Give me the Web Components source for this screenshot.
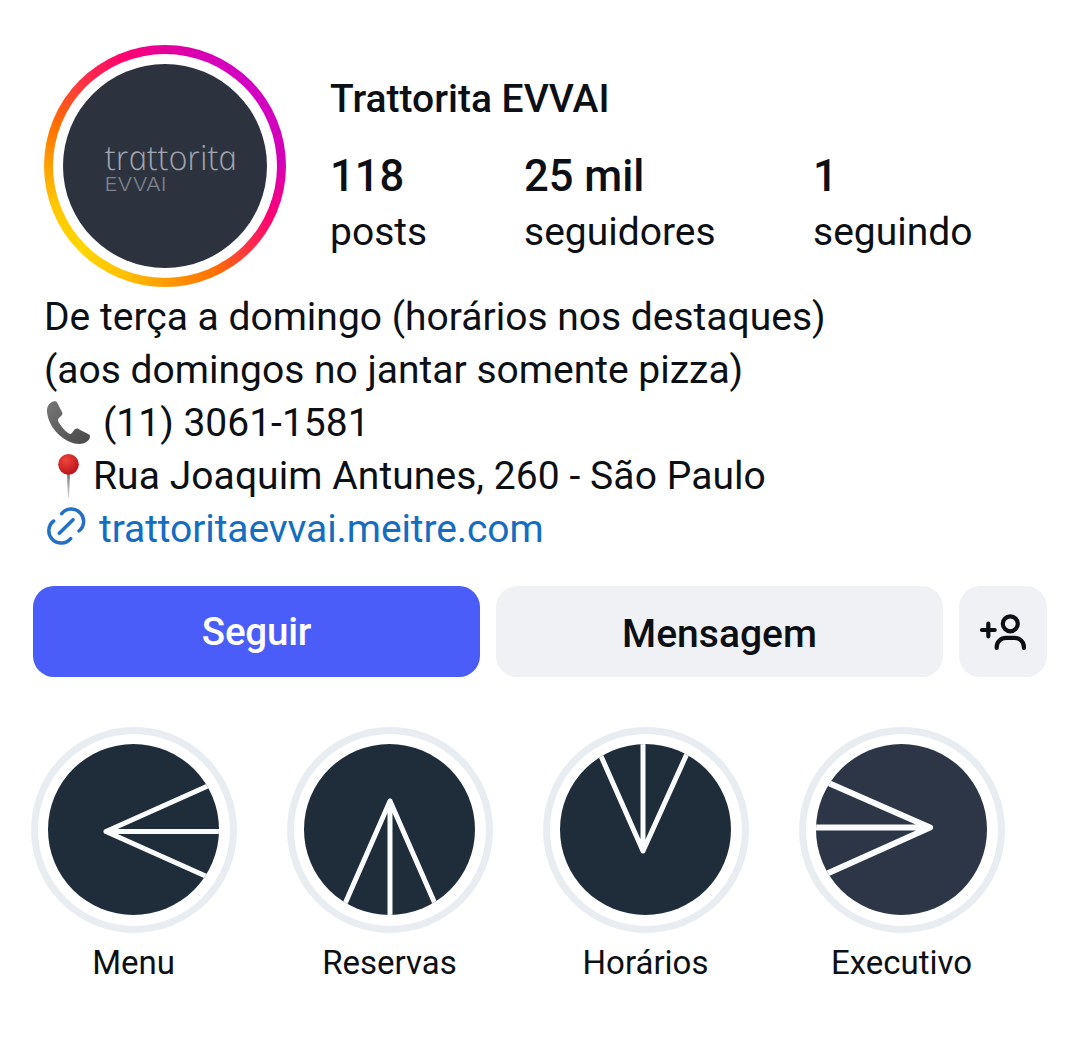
<!DOCTYPE html>
<html lang="pt-BR">
<head>
<meta charset="utf-8">
<title>Trattorita EVVAI</title>
<style>
body{margin:0;background:#fff;color:#0c1014;font-family:Roboto,"Liberation Sans",sans-serif}
</style>
</head>
<body>
<profile-page></profile-page>
<script>
const define=(name,html,setup)=>{
  const t=document.createElement('template');
  t.innerHTML=html;
  customElements.define(name,class extends HTMLElement{
    constructor(){super();this.attachShadow({mode:'open'}).append(t.content.cloneNode(true));}
    connectedCallback(){if(setup)setup(this,this.shadowRoot);}
  });
};

define('story-avatar',`<style>
:host{display:block;flex:none;width:242px;height:242px}
.ring{box-sizing:border-box;width:100%;height:100%;padding:9px;border-radius:50%;background:conic-gradient(#e5009a 0deg,#d800b5 20deg,#d300c5 45deg,#d300b8 88deg,#ff0075 115deg,#ff3344 135deg,#ff7000 155deg,#ff9c00 180deg,#ffc000 200deg,#ffd600 225deg,#ffc800 250deg,#ffa000 270deg,#ff7000 290deg,#ff3344 315deg,#ff0070 340deg,#e5009a 360deg)}
.gap{box-sizing:border-box;width:100%;height:100%;padding:10px;border-radius:50%;background:#fff}
svg{display:block;width:204px;height:204px;border-radius:50%;background:#2c333f}
.word{font-family:"Open Sans",sans-serif;font-style:italic;font-weight:300}
.sub{font-family:Inter,Lato,sans-serif;font-weight:300}
</style>
<div class="ring"><div class="gap"><svg viewBox="0 0 204 204">
<!-- the italic's single-storey letters, set upright -->
<text class="word" transform="translate(44 106) skewX(12)" font-size="34.500" textLength="132" lengthAdjust="spacingAndGlyphs" fill="#a0a5ae">trattorita</text>
<text class="sub" x="41.500" y="126.500" font-size="19" textLength="62" lengthAdjust="spacingAndGlyphs" fill="#7d848e">EVVAI</text>
</svg></div></div>`);

define('profile-stat',`<style>
:host{display:flex;flex-direction:column}
.n{font-size:43.5px;line-height:52px;font-weight:500}
.l{font-size:39px;line-height:52px;margin-top:3px}
</style><span class="n"><slot name="count"></slot></span><span class="l"><slot></slot></span>`);

define('profile-header',`<style>
:host{display:flex;gap:44px;padding:45px 0 0 44px;height:242px}
.info{display:flex;flex-direction:column;padding-top:28px}
.name{font-size:39px;line-height:52px;font-weight:500}
.stats{display:grid;grid-template-columns:194px 289px auto;margin-top:26px}
</style>
<story-avatar></story-avatar>
<div class="info"><span class="name"><slot></slot></span>
<div class="stats"><slot name="stats"></slot></div></div>`);

define('bio-line',`<style>
:host{display:flex;align-items:center;height:53.1px;font-size:39px;white-space:pre}
:host([link]){color:#156dc2;letter-spacing:-.1px}
::slotted(svg){flex:none;display:block}
</style><slot name="icon"></slot><span><slot></slot></span>`);

define('action-button',`<style>
:host{display:block;flex:1}
:host([compact]){flex:0 0 88px}
button{display:flex;align-items:center;justify-content:center;width:100%;height:91px;margin:0;padding:5px 0 0;border:0;border-radius:21px;background:#f0f1f5;color:#0c1014;font:500 39px Roboto,sans-serif}
:host([primary]) button{background:#4a5df9;color:#fff;padding:0;font-size:38.5px;letter-spacing:-.2px}
:host([compact]) button{padding:0}
</style><button><slot></slot></button>`);

define('story-highlight',`<style>
:host{display:flex;flex-direction:column;align-items:center;width:206px}
.ring{box-sizing:border-box;width:206px;height:206px;border:7.5px solid #e9edf1;border-radius:50%;padding:10px 0 0 10px}
svg{display:block;width:171px;height:171px;border-radius:50%;background:#1f2d3b;fill:none;stroke:#fafcfd;stroke-width:5;stroke-linejoin:round;stroke-linecap:round}
:host([light]) svg{background:#2c3646;stroke-width:6}
.label{font-size:33px;line-height:40px;margin-top:10px;padding-right:1px;white-space:nowrap}
</style>
<div class="ring"><svg viewBox="0 0 171 171"><path/></svg></div><span class="label"><slot></slot></span>`,
(el,root)=>root.querySelector('path').setAttribute('d',el.getAttribute('rays')));

define('profile-page',`<style>
:host{display:flex;flex-direction:column;width:1080px;height:1040px;overflow:hidden;background:#fff}
.bio{display:flex;flex-direction:column;padding:3px 0 0 44px}
.actions{display:flex;gap:16px;padding:30.5px 33px 0}
.highlights{display:flex;gap:50px;padding:50px 0 0 31px}
</style>
<profile-header>Trattorita EVVAI
<profile-stat slot="stats"><span slot="count">118</span>posts</profile-stat>
<profile-stat slot="stats"><span slot="count">25 mil</span>seguidores</profile-stat>
<profile-stat slot="stats"><span slot="count">1</span>seguindo</profile-stat>
</profile-header>
<div class="bio">
<bio-line>De terça a domingo (horários nos destaques)</bio-line>
<bio-line>(aos domingos no jantar somente pizza)</bio-line>
<bio-line><svg slot="icon" width="59" height="47" viewBox="42 27 177 141"><defs><linearGradient id="ph" x1="0" y1="0" x2="1" y2="1"><stop stop-color="#777"/><stop offset="1" stop-color="#484848"/></linearGradient></defs><path fill="url(#ph)" d="M72 34C59 36 50 49 51 65C53 91 68 118 91 138C113 157 141 166 161 160C172 156 180 148 180 139C180 135 177 133 173 131L145 117C139 114 135 117 132 121L125 130C122 133 118 132 114 129C103 121 92 108 86 97C83 91 83 87 87 84L94 77C98 73 98 70 96 66L82 39C80 35 77 33 72 34Z"/></svg>(11) 3061-1581</bio-line>
<bio-line style="letter-spacing:.07px"><svg slot="icon" width="49" height="47" viewBox="42 186 147 141"><defs><radialGradient id="pin" cx=".38" cy=".3" r=".7"><stop stop-color="#f0443c"/><stop offset="1" stop-color="#b9161a"/></radialGradient><linearGradient id="ndl" x1="0" y1="0" x2="0" y2="1"><stop stop-color="#777"/><stop offset="1" stop-color="#d0d0d0"/></linearGradient></defs><path fill="url(#ndl)" d="M111 250H120L117 322H114Z"/><circle cx="115.500" cy="223" r="31" fill="url(#pin)"/></svg>Rua Joaquim Antunes, 260 - São Paulo</bio-line>
<bio-line link><svg slot="icon" width="55" height="48" viewBox="42 345 165 144" fill="none" stroke="#2370c4" stroke-width="10.500" stroke-linecap="round"><path d="M95 371A37 37 0 1 1 147 423M71 393A37 37 0 1 0 122 446M88 430L129 389"/></svg>trattoritaevvai.meitre.com</bio-line>
</div>
<div class="actions">
<action-button primary>Seguir</action-button>
<action-button>Mensagem</action-button>
<action-button compact><svg width="88" height="91" viewBox="959 586 88 91" fill="none" stroke="#0c1014" stroke-width="4.200" stroke-linecap="round"><circle cx="1010.300" cy="623.800" r="7.500"/><path d="M996.700 648V647A9.200 9.200 0 0 1 1005.900 637.900H1014.700A9.200 9.200 0 0 1 1023.900 647V648M982 630H994.700M988.300 623.700V636.300"/></svg></action-button>
</div>
<div class="highlights">
<story-highlight rays="M162 41L58 87.500L162 134M58 87.500H175">Menu</story-highlight>
<story-highlight rays="M40 162L86 57L132 162M86 57V175">Reservas</story-highlight>
<story-highlight rays="M37 3L83 107L130 3M83 107V-5">Horários</story-highlight>
<story-highlight light rays="M8 37L114 83.500L8 131M114 83.500H-5">Executivo</story-highlight>
</div>`);
</script>
</body>
</html>
